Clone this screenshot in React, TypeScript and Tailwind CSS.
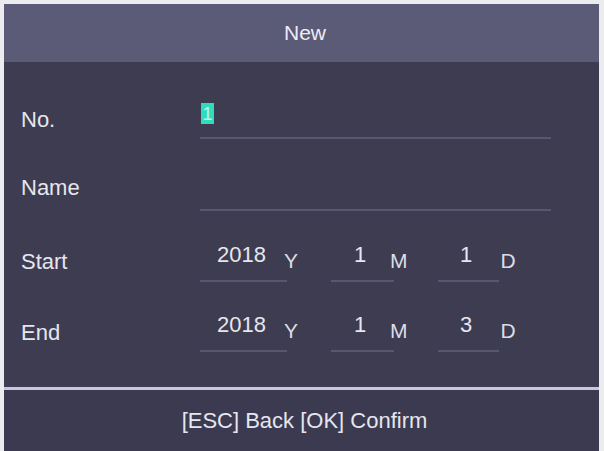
import React from "react";

type Segment = {
  value: string;
  unit: string;
  box: string;
  line: string;
  unitGap: string;
};

const font = { fontFamily: '"Liberation Sans", Arial, sans-serif' };

function DateField({ segments }: { segments: Segment[] }) {
  return (
    <div className="flex">
      {segments.map((s, i) => (
        <div key={i} className={`flex flex-col ${i === 1 ? "ml-[33px]" : i === 2 ? "ml-[30px]" : ""}`}>
          <div className="flex h-[26px] items-center">
            <span className={`${s.box} mb-[5px] text-center text-[22px] leading-none text-[#e6e6ee]`}>
              {s.value}
            </span>
            <span className={`${s.unitGap} mt-[6px] text-[21px] leading-none text-[#dcdce6]`}>{s.unit}</span>
          </div>
          <div className={`${s.line} mt-[10px] h-[2px] bg-[#595670]`} />
        </div>
      ))}
    </div>
  );
}

function Row({
  label,
  height,
  lift = "",
  children,
}: {
  label: string;
  height: string;
  lift?: string;
  children: React.ReactNode;
}) {
  return (
    <div className={`flex ${height} items-center`}>
      <div className={`w-[196px] pl-[17px] text-[22px] leading-none text-[#e6e6ee] ${lift}`}>{label}</div>
      <div className="flex flex-col">{children}</div>
    </div>
  );
}

export default function App() {
  return (
    <div style={font} className="flex h-[451px] w-[604px] bg-[#ececf0] pl-[4px] pr-[5px] pt-[4px]">
      <div className="flex flex-1 flex-col">
        <div className="flex h-[58px] items-center justify-center bg-[#5b5a77] pl-[7px] text-[21px] text-[#ececf6]">
          New
        </div>

        <div className="flex-1 bg-[#3e3c51] pt-[22px]">
          <Row label="No." height="h-[71px]">
            <div className="flex h-[26px] items-center">
              <span className="ml-[1px] flex h-[21px] w-[13px] items-center justify-center bg-[#30dcbc] text-[18px] leading-none text-[#b6f6ea]">
                1
              </span>
            </div>
            <div className="mt-[10px] h-[2px] w-[351px] bg-[#595670]" />
          </Row>

          <Row label="Name" height="h-[73px]" lift="mb-[8px]">
            <div className="h-[26px]" />
            <div className="mt-[10px] h-[2px] w-[351px] bg-[#595670]" />
          </Row>

          <Row label="Start" height="h-[70px]" lift="mb-[2px]">
            <DateField
              segments={[
                { value: "2018", unit: "Y", box: "w-[83px]", line: "w-[87px]", unitGap: "ml-[1px]" },
                { value: "1", unit: "M", box: "w-[58px]", line: "w-[63px]", unitGap: "ml-[1px]" },
                { value: "1", unit: "D", box: "w-[57px]", line: "w-[61px]", unitGap: "ml-[6px]" },
              ]}
            />
          </Row>

          <Row label="End" height="h-[70px]">
            <DateField
              segments={[
                { value: "2018", unit: "Y", box: "w-[83px]", line: "w-[87px]", unitGap: "ml-[1px]" },
                { value: "1", unit: "M", box: "w-[58px]", line: "w-[63px]", unitGap: "ml-[1px]" },
                { value: "3", unit: "D", box: "w-[57px]", line: "w-[61px]", unitGap: "ml-[6px]" },
              ]}
            />
          </Row>
        </div>

        <div className="h-[3px] bg-[#c9c7e0]" />

        <div className="flex h-[61px] items-center justify-center bg-[#3b3a50] pl-[6px] text-[22px] text-[#e6e6ee]">
          [ESC] Back [OK] Confirm
        </div>
      </div>
    </div>
  );
}
